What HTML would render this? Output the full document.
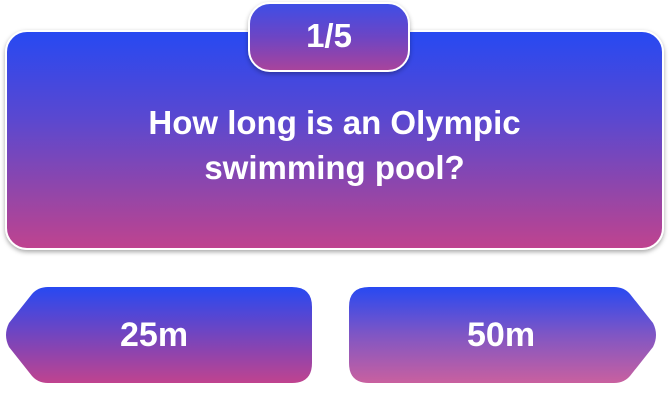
<!DOCTYPE html>
<html><head><style>
html,body{margin:0;padding:0;background:#fff;width:669px;height:411px;overflow:hidden;position:relative;font-family:"Liberation Sans",sans-serif;font-weight:bold;color:#fff}
.card{position:absolute;left:5px;top:30px;width:655px;height:216px;border:2px solid #fff;border-radius:22px;background:linear-gradient(180deg,#2749f2 0%,#5a48d0 40%,#9446a8 75%,#bf438f 100%);box-shadow:0 2px 5px rgba(0,0,0,.35)}
.badge{position:absolute;left:248px;top:2px;width:158px;height:66px;border:2px solid #fff;border-radius:22px;background:linear-gradient(180deg,#3e4ee6 0%,#6d45c4 50%,#a8449c 100%);box-shadow:0 2px 5px rgba(0,0,0,.3);text-align:center;line-height:64px;font-size:33px}
.q{position:absolute;left:0;width:669px;top:100px;text-align:center;font-size:33px;line-height:45px}
.t{position:absolute;font-size:34px;top:316px}
</style></head><body>
<div class="card"></div>
<div class="badge">1/5</div>
<div class="q">How long is an Olympic<br>swimming pool?</div>
<svg width="669" height="411" style="position:absolute;left:0;top:0">
<defs>
<linearGradient id="g1" x1="0" y1="0" x2="0" y2="1"><stop offset="0" stop-color="#2749f2"/><stop offset=".5" stop-color="#7345bf"/><stop offset="1" stop-color="#c0438f"/></linearGradient>
<linearGradient id="g2" x1="0" y1="0" x2="0" y2="1"><stop offset="0" stop-color="#2749f2"/><stop offset=".5" stop-color="#8056c4"/><stop offset="1" stop-color="#c9609f"/></linearGradient>
</defs>
<path d="M48 287 H292 Q312 287 312 307 V363 Q312 383 292 383 H48 Q38 383 32 376 L9 347 Q3 335 9 323 L32 294 Q38 287 48 287 Z" fill="url(#g1)"/>
<path d="M369 287 H614 Q624 287 630 294 L653 323 Q659 335 653 347 L630 376 Q624 383 614 383 H369 Q349 383 349 363 V307 Q349 287 369 287 Z" fill="url(#g2)"/>
</svg>
<div class="t" style="left:120px">25m</div>
<div class="t" style="left:467px">50m</div>
</body></html>
